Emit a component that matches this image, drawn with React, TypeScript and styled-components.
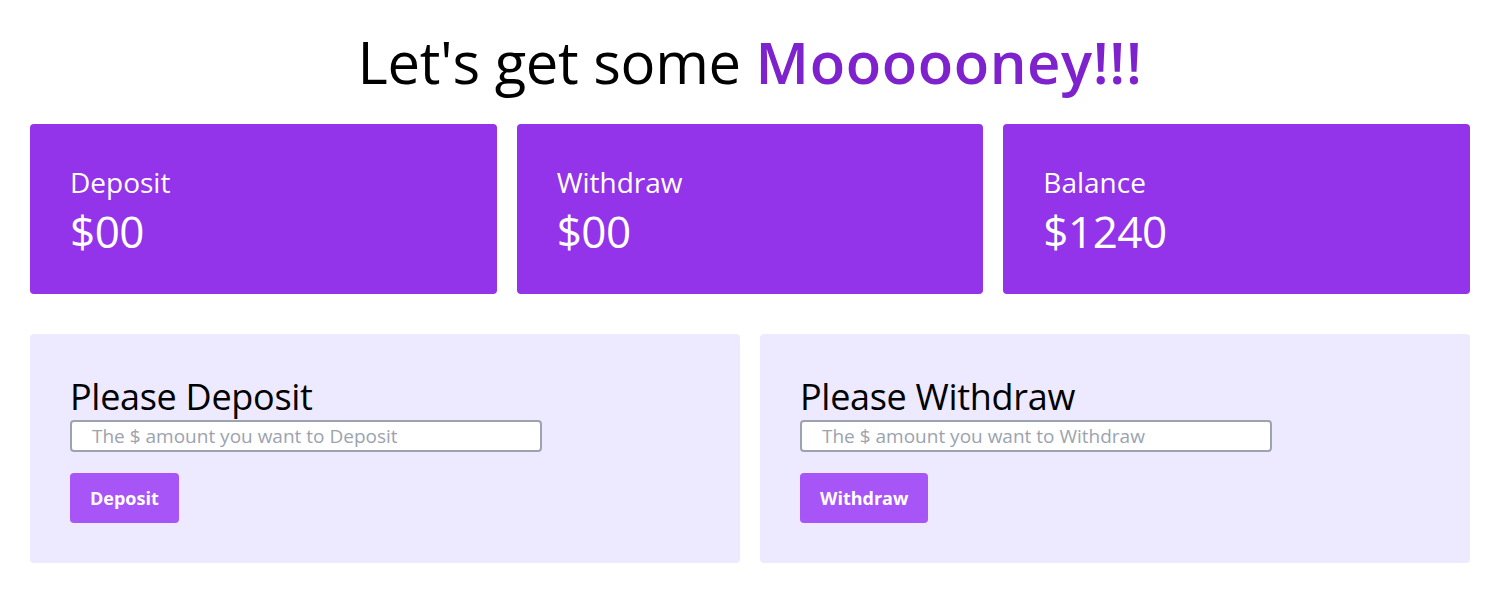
import React from "react";
import styled, { createGlobalStyle } from "styled-components";

const Global = createGlobalStyle`
  * { box-sizing: border-box; }
  body {
    margin: 0;
    background: #ffffff;
    font-family: "Segoe UI", "Open Sans", "Noto Sans", sans-serif;
    color: #000;
  }
`;

const Page = styled.main`
  max-width: 1500px;
  padding: 22px 30px 40px;
  display: flex;
  flex-direction: column;
`;

const Title = styled.h1`
  margin: 0;
  text-align: center;
  font-size: 58px;
  font-weight: 400;
  line-height: 80px;
  letter-spacing: -0.3px;
`;

const Accent = styled.span`
  color: #7e22ce;
  font-weight: 600;
  letter-spacing: 0.6px;
`;

const Stats = styled.section`
  margin-top: 22px;
  display: grid;
  grid-template-columns: repeat(3, 1fr);
  gap: 20px;
`;

const StatCard = styled.div`
  background: #9333ea;
  color: #ffffff;
  border-radius: 4px;
  height: 170px;
  padding: 39px 40px 0;
  display: flex;
  flex-direction: column;
`;

const StatLabel = styled.div`
  font-size: 28px;
  line-height: 38px;
`;

const StatValue = styled.div`
  font-size: 44px;
  line-height: 60px;
  letter-spacing: -0.5px;
`;

const Actions = styled.section`
  margin-top: 40px;
  display: grid;
  grid-template-columns: 1fr 1fr;
  gap: 20px;
`;

const Panel = styled.div`
  background: #ede9fe;
  border-radius: 4px;
  padding: 40px;
  display: flex;
  flex-direction: column;
  align-items: flex-start;
`;

const PanelHeading = styled.h2`
  margin: 0;
  font-size: 36px;
  font-weight: 400;
  line-height: 46px;
  letter-spacing: -0.3px;
`;

const AmountInput = styled.input`
  width: 472px;
  height: 32px;
  border: 2px solid #9ca3af;
  border-radius: 4px;
  padding: 0 20px;
  font-family: inherit;
  font-size: 19px;
  background: #fff;
  outline: none;
  &::placeholder {
    color: #9ca3af;
  }
`;

const ActionButton = styled.button`
  margin-top: 21px;
  height: 50px;
  padding: 0 20px;
  border: none;
  border-radius: 4px;
  background: #a855f7;
  color: #ffffff;
  font-family: inherit;
  font-size: 18px;
  font-weight: 700;
  cursor: pointer;
`;

const stats = [
  { label: "Deposit", value: "$00" },
  { label: "Withdraw", value: "$00" },
  { label: "Balance", value: "$1240" },
];

const actions = [
  { heading: "Please Deposit", placeholder: "The $ amount you want to Deposit", button: "Deposit" },
  { heading: "Please Withdraw", placeholder: "The $ amount you want to Withdraw", button: "Withdraw" },
];

export default function App() {
  return (
    <>
      <Global />
      <Page>
        <Title>
          Let's get some <Accent>Moooooney!!!</Accent>
        </Title>
        <Stats>
          {stats.map((s) => (
            <StatCard key={s.label}>
              <StatLabel>{s.label}</StatLabel>
              <StatValue>{s.value}</StatValue>
            </StatCard>
          ))}
        </Stats>
        <Actions>
          {actions.map((a) => (
            <Panel key={a.heading}>
              <PanelHeading>{a.heading}</PanelHeading>
              <AmountInput type="number" placeholder={a.placeholder} />
              <ActionButton>{a.button}</ActionButton>
            </Panel>
          ))}
        </Actions>
      </Page>
    </>
  );
}
